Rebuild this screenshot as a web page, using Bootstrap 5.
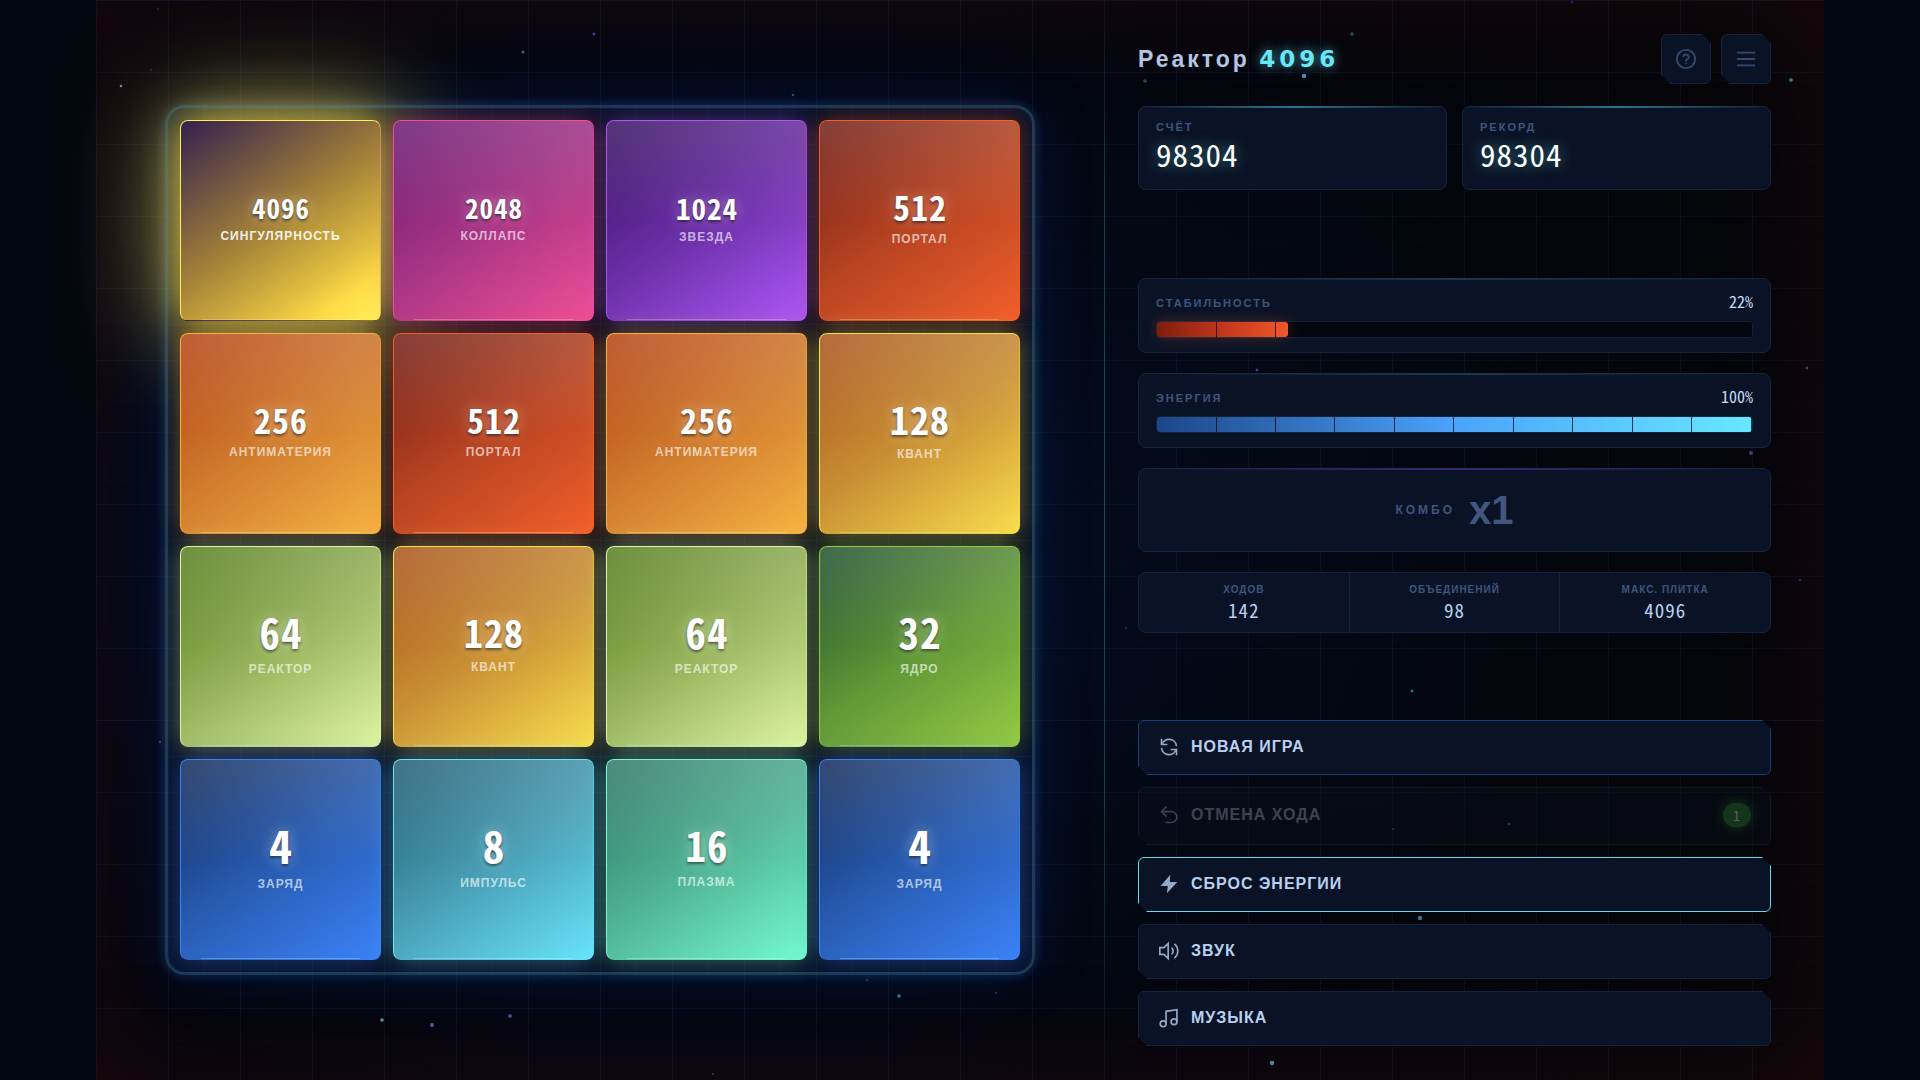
<!DOCTYPE html>
<html lang="ru" data-bs-theme="dark">
<head>
<meta charset="utf-8">
<meta name="viewport" content="width=device-width, initial-scale=1">
<title>Реактор 4096</title>
<link href="https://cdn.jsdelivr.net/npm/bootstrap@5.3.0/dist/css/bootstrap.min.css" rel="stylesheet">
<style>
:root { --mono: "Noto Sans Mono CJK SC", "Liberation Sans Narrow", Roboto, sans-serif; --line: #16233f; --panel: #0a1325; --mute: #3f557e; --soft: #b9d0f0; }
body { background: #02060e; font-family: "Liberation Sans", Arial, sans-serif; color: var(--soft); }
.game { width: 90vw; min-height: 100vh; isolation: isolate;
  background:
    repeating-linear-gradient(90deg, rgba(45,75,165,.12) 0 1px, transparent 1px 72px),
    repeating-linear-gradient(0deg, transparent 0 71px, rgba(45,75,165,.12) 71px 72px),
    repeating-linear-gradient(180deg, rgba(45,75,165,.04) 0 1px, transparent 1px 80px),
    radial-gradient(ellipse 70% 80% at 35% 50%, #040f28 0%, #030918 40%, #04060c 72%, #050609 100%); }
.game::before { content: ""; position: absolute; inset: 0; z-index: -1; box-shadow: inset 0 0 120px rgba(150,20,25,.15); pointer-events: none; }
.sparks { position: absolute; inset: 0; width: 100%; height: 100%; pointer-events: none; z-index: 3; }
.board { width: min(86.4%, calc(100vh - 210px)); display: grid; grid-template-columns: repeat(4, minmax(0, 1fr)); gap: 12px; padding: 12px;
  border: 3px solid rgba(50,105,150,.16); border-radius: 20px;
  background: repeating-linear-gradient(90deg, rgba(60,100,190,.08) 0 1px, transparent 1px 36px), repeating-linear-gradient(180deg, rgba(60,100,190,.08) 0 1px, transparent 1px 36px), #050a18;
  box-shadow: 0 0 12px rgba(40,110,200,.3), 0 0 60px rgba(20,70,200,.2), inset 0 0 26px rgba(20,80,190,.24); }
.board::after { content: ""; position: absolute; inset: -3px; border: 3px solid rgba(70,145,185,.24); border-radius: 20px; pointer-events: none; }
.tile { aspect-ratio: 1; padding-bottom: 2px; border-radius: 8px; border: 1px solid; border-color: var(--c) color-mix(in srgb, var(--c) 60%, transparent) transparent var(--c);
  background: linear-gradient(180deg, rgba(255,255,255,.15), transparent 50%) padding-box, linear-gradient(145deg, var(--a), var(--b) 50%, var(--c)) border-box;
  box-shadow: 0 0 24px color-mix(in srgb, var(--c) 45%, transparent); }
.tile::after { content: ""; position: absolute; left: 10%; right: 10%; bottom: 0; height: 1px; background: rgba(255,255,255,.25); }
.tile-num { font: 700 27px/1 var(--mono); letter-spacing: 1px; color: #fff; margin: -.1em -1px .1em 0; text-shadow: 0 2px 3px rgba(0,0,0,.5), 0 0 14px rgba(255,255,255,.4); }
.tile-name { font-size: 12px; line-height: 14px; font-weight: 700; letter-spacing: 1px; margin-top: 5px; color: rgba(255,255,255,.65); }
.v4 { --a:#122a59; --b:#285cb2; --c:#3b82f8; } .v4 .tile-num { font-size: 46px; }
.v8 { --a:#1f5a6f; --b:#489db4; --c:#67e5fc; } .v8 .tile-num { font-size: 43px; }
.v16 { --a:#2c7565; --b:#50b393; --c:#74fbd0; } .v16 .tile-num { font-size: 41px; }
.v32 { --a:#1f4e2e; --b:#609636; --c:#95cb44; } .v32 .tile-num { font-size: 41px; }
.v64 { --a:#557b1d; --b:#97b45c; --c:#def6a4; } .v64 .tile-num { font-size: 41px; }
.v128 { --a:#a7521a; --b:#c98f34; --c:#f9de4d; } .v128 .tile-num { font-size: 38px; }
.v256 { --a:#b44012; --b:#d17c2e; --c:#f6b342; } .v256 .tile-num { font-size: 34px; }
.v512 { --a:#6f1c15; --b:#b84422; --c:#f25e2b; } .v512 .tile-num { font-size: 34px; }
.v1024 { --a:#36105f; --b:#6c2fa8; --c:#ad57f7; } .v1024 .tile-num { font-size: 29px; }
.v2048 { --a:#671872; --b:#a83585; --c:#f04f97; }
.v4096 { --c:#ffee58; background: linear-gradient(145deg, #34204f, #a68338 50%, #e0bd40 75%, #ffdd48 87%, #fff05c); box-shadow: 0 0 36px rgba(255,232,80,.6), 0 0 100px 14px rgba(255,226,80,.62); }
.v4096 .tile-name { color: rgba(255,255,255,.9); }
.side { padding: 34px 53px 34px 33px; border-left: 1px solid; border-image: linear-gradient(transparent, #16404f 20%, #1c4a5c 50%, #16404f 70%, transparent) 1; }
.tools { gap: 10px; }
.pair { gap: 15px; margin-top: 22px; }
.stack { gap: 20px; }
.acts { gap: 12px; }
.brand { font-size: 23px; line-height: 28px; font-weight: 700; letter-spacing: 3px; color: #b3c5e2; }
.brand-num { font-family: "DejaVu Sans", sans-serif; letter-spacing: 4px; color: #67e8f9; text-shadow: 0 0 12px rgba(90,225,250,.7); }
.cut { background: var(--panel); border: 1px solid var(--line); border-radius: 6px; clip-path: polygon(0 0, calc(100% - 9px) 0, 100% 9px, 100% 100%, 9px 100%, 0 calc(100% - 9px)); }
.tool { width: 50px; height: 50px; color: #33496f; }
.panel { background: var(--panel); border: 1px solid var(--line); border-radius: 8px; }
.panel::before { content: ""; position: absolute; left: 0; right: 0; top: -1px; height: 2px; background: linear-gradient(90deg, transparent, var(--edge, transparent), transparent); }
.cap { font-size: 11px; line-height: 14px; font-weight: 700; letter-spacing: 2px; color: var(--mute); text-transform: uppercase; }
.score { height: 84px; padding: 13px 17px; --edge: #2f7486; }
.score-num { font: 500 31px/32px var(--mono); letter-spacing: 1px; color: #fff; margin-top: 4px; text-shadow: 0 0 14px rgba(103,232,249,.5); }
.meter { padding: 15px 17px 14px; --edge: #17384d; }
.meter-row { height: 18px; }
.meter-row .cap { margin-top: 2px; }
.meter-val { font: 500 16px/14px var(--mono); color: #c7dcf8; }
.track { height: 17px; border: 1px solid #14213a; border-radius: 4px; background: #04060f; margin-top: 9px; }
.track::after { content: ""; position: absolute; inset: 0; background: repeating-linear-gradient(90deg, transparent 0 calc(10% - 1px), rgba(4,8,20,.75) calc(10% - 1px) 10%); }
.fill { height: 100%; border-radius: 3px; }
.hot { background: linear-gradient(90deg, #7f1d0e, #c2371c 50%, #f0572a); box-shadow: 0 0 14px rgba(240,87,42,.3); }
.cool { background: linear-gradient(90deg, #1d4588, #4ba3fb 50%, #67e8ff); }
.combo { height: 84px; --edge: #3d2877; gap: 14px; }
.combo .cap { font-size: 12px; letter-spacing: 3px; }
.combo-num { font-size: 40px; line-height: 44px; font-weight: 700; color: #415780; }
.stat { padding: 11px 0 11px; }
.stat + .stat { border-left: 1px solid var(--line); }
.stat .cap { font-size: 10px; line-height: 12px; letter-spacing: 1px; }
.stat-num { font: 500 19px/22px var(--mono); letter-spacing: 1px; margin-top: 3px; }
.act { height: 55px; padding: 0 19px 2px 20px; gap: 12px; color: var(--soft); font-size: 16px; line-height: 20px; font-weight: 700; letter-spacing: 1px; text-align: left; }
.act svg { color: #94a8c8; }
.act.fresh { border-color: #1a3d7c; }
.act.dump { border-color: #5fd9ec; }
.act.undo { height: 58px; opacity: .35; background: #0c1322; border-color: #1e4238; color: #aab2c2; }
.undo-count { min-width: 28px; font: 400 14px/24px var(--mono); text-align: center; border-radius: 12px; background: #2f8f3c; color: #fff; box-shadow: 0 0 12px #2f8f3c; }
</style>
</head>
<body>
<main class="game row g-0 mx-auto position-relative">
  <section class="col-7 d-flex align-items-center justify-content-center" aria-label="Поле">
    <div class="board position-relative" id="board"></div>
  </section>
  <aside class="side col-5 d-flex flex-column justify-content-between">
    <div>
      <header class="d-flex align-items-center justify-content-between">
        <h1 class="brand m-0">Реактор <span class="brand-num">4096</span></h1>
        <div class="d-flex tools">
          <button class="cut tool d-flex align-items-center justify-content-center p-0" aria-label="Помощь"><svg width="22" height="22" viewBox="0 0 24 24" fill="none" stroke="currentColor" stroke-width="2" stroke-linecap="round"><circle cx="12" cy="12" r="10"/><path d="M9.1 9a3 3 0 0 1 5.8 1c0 2-2.9 2.4-2.9 4M12 17h.01"/></svg></button>
          <button class="cut tool d-flex align-items-center justify-content-center p-0" aria-label="Меню"><svg width="22" height="22" viewBox="0 0 24 24" fill="none" stroke="currentColor" stroke-width="2"><path d="M2 5h20M2 12h20M2 19h20"/></svg></button>
        </div>
      </header>
      <div class="d-flex pair">
        <div class="panel score position-relative flex-fill"><div class="cap">Счёт</div><div class="score-num">98304</div></div>
        <div class="panel score position-relative flex-fill"><div class="cap">Рекорд</div><div class="score-num">98304</div></div>
      </div>
    </div>
    <div class="d-flex flex-column stack">
      <div class="panel meter position-relative">
        <div class="meter-row d-flex justify-content-between align-items-start"><span class="cap">Стабильность</span><span class="meter-val">22%</span></div>
        <div class="track position-relative" role="progressbar" aria-label="Стабильность" aria-valuenow="22"><div class="fill hot" style="width:22%"></div></div>
      </div>
      <div class="panel meter position-relative">
        <div class="meter-row d-flex justify-content-between align-items-start"><span class="cap">Энергия</span><span class="meter-val">100%</span></div>
        <div class="track position-relative" role="progressbar" aria-label="Энергия" aria-valuenow="100"><div class="fill cool" style="width:100%"></div></div>
      </div>
      <div class="panel combo position-relative d-flex align-items-center justify-content-center"><span class="cap">Комбо</span><span class="combo-num">x1</span></div>
      <div class="panel position-relative d-flex text-center">
        <div class="stat col"><div class="cap">Ходов</div><div class="stat-num">142</div></div>
        <div class="stat col"><div class="cap">Объединений</div><div class="stat-num">98</div></div>
        <div class="stat col"><div class="cap">Макс. плитка</div><div class="stat-num">4096</div></div>
      </div>
    </div>
    <div class="d-flex flex-column acts">
      <button class="cut act fresh d-flex align-items-center"><svg width="20" height="20" viewBox="0 0 24 24" fill="none" stroke="currentColor" stroke-width="2"><path d="M3 2v7h7M21 22v-7h-7"/><path d="M3.500 9A9 9 0 0 1 21 11M20.500 15A9 9 0 0 1 3 13"/></svg>НОВАЯ ИГРА</button>
      <button class="cut act undo d-flex align-items-center" disabled><svg width="20" height="20" viewBox="0 0 24 24" fill="none" stroke="currentColor" stroke-width="2"><path d="M9 2 3 8l6 6M3 8h12a6 6 0 0 1 0 13H8"/></svg>ОТМЕНА ХОДА<span class="undo-count ms-auto">1</span></button>
      <button class="cut act dump d-flex align-items-center"><svg width="20" height="20" viewBox="0 0 24 24" fill="currentColor"><path d="M13.500 1 2 14.500h8.500L9.500 23 22 9.500h-9z"/></svg>СБРОС ЭНЕРГИИ</button>
      <button class="cut act d-flex align-items-center"><svg width="20" height="20" viewBox="0 0 24 24" fill="none" stroke="currentColor" stroke-width="2"><path d="M11 3v18l-5-5H1V8h5zM15 8a5 5 0 0 1 0 8M18.500 3.500a11 11 0 0 1 0 17"/></svg>ЗВУК</button>
      <button class="cut act d-flex align-items-center"><svg width="20" height="20" viewBox="0 0 24 24" fill="none" stroke="currentColor" stroke-width="2"><circle cx="5" cy="19" r="3.500"/><circle cx="18" cy="16.500" r="3.500"/><path d="M8.500 19V4l13-2v14.500"/></svg>МУЗЫКА</button>
    </div>
  </aside>
  <svg class="sparks" id="sparks" viewBox="0 0 1728 1080" preserveAspectRatio="xMidYMid slice" aria-hidden="true"></svg>
</main>
<script src="https://cdn.jsdelivr.net/npm/bootstrap@5.3.0/dist/js/bootstrap.bundle.min.js"></script>
<script>
const names = {4:'ЗАРЯД',8:'ИМПУЛЬС',16:'ПЛАЗМА',32:'ЯДРО',64:'РЕАКТОР',128:'КВАНТ',256:'АНТИМАТЕРИЯ',512:'ПОРТАЛ',1024:'ЗВЕЗДА',2048:'КОЛЛАПС',4096:'СИНГУЛЯРНОСТЬ'};
const cells = [4096,2048,1024,512,256,512,256,128,64,128,64,32,4,8,16,4];
document.getElementById('board').innerHTML = cells.map(v =>
  `<div class="tile v${v} position-relative d-flex flex-column align-items-center justify-content-center"><div class="tile-num">${v}</div><div class="tile-name">${names[v]}</div></div>`).join('');
// x, y, radius, colour
const dots = [[25,86,1.3,'#5f8fb4'],[55,70,.7,'#4a5a80'],[62,9,.8,'#39406a'],[427,52,1.6,'#3d5d80'],[498,34,1.5,'#3d4390'],[697,95,1.3,'#2f5070'],
 [286,1020,1.8,'#4f9a9c'],[336,1025,2,'#3f5f95'],[414,1016,1.9,'#454b95'],[803,996,1.8,'#3a7585'],[771,980,1.6,'#23305c'],[900,993,1,'#3a2f7c'],[64,742,1,'#3a5a88'],
 [1049,81,1.8,'#2c4658'],[1208,76,2.2,'#4f8fb0'],[1256,34,1.9,'#23444a'],[1476,2,1.8,'#221c48'],[1695,80,1.8,'#458693'],
 [1161,370,1.4,'#3a4390'],[1711,368,1.4,'#3a4080'],[1655,453,1.9,'#3d4390'],[1704,580,1.3,'#2b2f60'],[1030,628,.8,'#2c6858'],[1316,691,1.4,'#2f6f6a'],
 [1324,918,2.2,'#47708c'],[1176,1063,2.2,'#4f8898'],[1413,824,1,'#2c4878'],[1297,829,1,'#24364c'],[617,1074,1,'#28345c']];
document.getElementById('sparks').innerHTML = dots.map(d => `<circle cx="${d[0]}" cy="${d[1]}" r="${d[2]}" fill="${d[3]}"/>`).join('');
</script>
</body>
</html>
